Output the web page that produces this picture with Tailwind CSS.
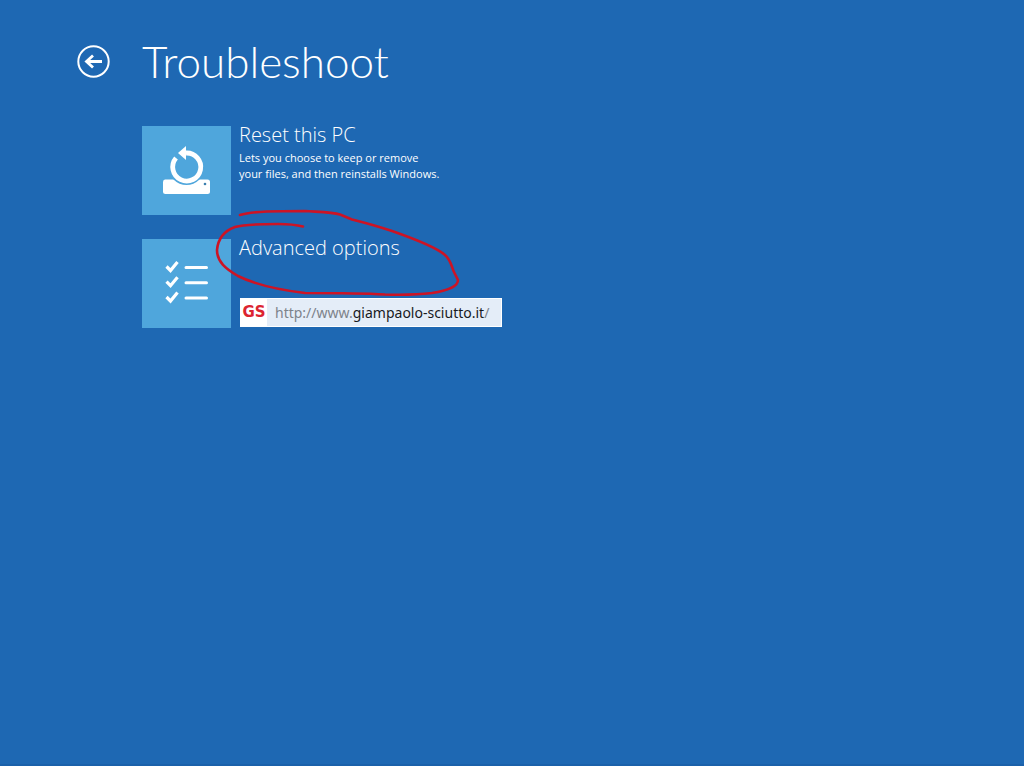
<!DOCTYPE html>
<html lang="en">
<head>
  <meta charset="UTF-8" />
  <meta name="viewport" content="width=device-width, initial-scale=1.0"/>
  <title>Troubleshoot</title>
  <script src="https://cdn.jsdelivr.net/npm/@tailwindcss/browser@4"></script>
</head>
<body class="bg-[#1e68b3] min-h-screen text-white font-['Open_Sans',sans-serif] border-b-2 border-[#1b61aa]">

  <header class="flex items-center gap-8 pl-[77px] pt-8">
    <button aria-label="Back" class="cursor-pointer size-[33px]">
      <svg viewBox="0 0 33 33" class="size-full" fill="none" stroke="currentColor">
        <circle cx="16.5" cy="16.5" r="15.2" stroke-width="2"/>
        <path d="M25 16.5H9.5M16 10.500L9.500 16.500L16 22.500" stroke-width="2.8"/>
      </svg>
    </button>
    <h1 class="font-['Lato',sans-serif] text-[44px] leading-[58px] font-light">Troubleshoot</h1>
  </header>

  <main class="pl-[142px] pt-9">
    <ul class="flex flex-col gap-6">
      <li>
        <button class="cursor-pointer flex gap-2 text-left">
          <span class="bg-[#4fa6dc] size-[89px] shrink-0">
            <svg viewBox="0 0 89 89" class="size-full">
              <path d="M23 53.5H65.5Q68 53.5 68 56V65.5Q68 68 65.5 68H23.500Q21 68 21 65.500V56Q21 53.500 23 53.500Z" fill="#fff"/>
              <circle cx="44.500" cy="41" r="18" fill="#4fa6dc"/>
              <path d="M34 32A14 14 0 1 0 44 27" fill="none" stroke="#fff" stroke-width="4.800"/>
              <path d="M36 27L44 20V34Z" fill="#fff"/>
              <circle cx="63" cy="58" r="1.300" fill="#3a7fae"/>
            </svg>
          </span>
          <span>
            <span class="block text-xl leading-6 font-light -mt-[3px]">Reset this PC</span>
            <span class="block text-[11px] leading-4 mt-[3px]">Lets you choose to keep or remove<br>your files, and then reinstalls Windows.</span>
          </span>
        </button>
      </li>
      <li class="relative">
        <button class="cursor-pointer flex gap-2 text-left">
          <span class="bg-[#4fa6dc] size-[89px] shrink-0">
            <svg viewBox="0 0 89 89" class="size-full" fill="none" stroke="#fff">
              <path d="M24.500 27.500L28.500 31.500L35.500 23M24.500 42.700L28.500 46.700L35.500 38.200M24.500 58L28.500 62L35.500 53.500" stroke-width="3.200"/>
              <path d="M44 28.500H64.500M44 43.700H64.500M44 59H64.500" stroke-width="3" stroke-linecap="round"/>
            </svg>
          </span>
          <span class="text-xl leading-6 font-light -mt-[3px]">Advanced options</span>
        </button>
        <!-- site label -->
        <a href="http://www.giampaolo-sciutto.it/" class="absolute left-[98px] top-[59px] flex items-center gap-2 h-[29px] border border-white bg-[#e4edf8] text-[#7d838b] font-['Noto_Sans',sans-serif] text-sm whitespace-nowrap pr-3">
          <span class="bg-white h-full w-[26px] flex items-center justify-center text-[#dc2430] font-['DejaVu_Sans',sans-serif] text-[15px] font-bold">GS</span>
          <span>http://www.<span class="text-[#181a1d]">giampaolo-sciutto.it</span>/</span>
        </a>
        <!-- red marker -->
        <svg viewBox="210 205 256 96" class="absolute left-[68px] -top-[34px] w-64 h-24 pointer-events-none" fill="none" stroke="#cc1425" stroke-width="2.600" stroke-linecap="round" stroke-linejoin="round">
          <path d="M240 215C252 211 278 211 305 211C320 212 332 212 340 214.500L352 219.500C366 223 380 227 392 231C412 238 436 247 445 255C451 260 452 268 454 272L458 280C458 287 445 291 432 293C415 295 400 295 385 294.500C360 293 330 293 305 293C280 290 258 286 238 276C226 269 217 262 217 250C218 239 224 231 235 227C245 224 260 224 278 224C288 224 297 225 303 226.500"/>
        </svg>
      </li>
    </ul>
  </main>

</body>
</html>
